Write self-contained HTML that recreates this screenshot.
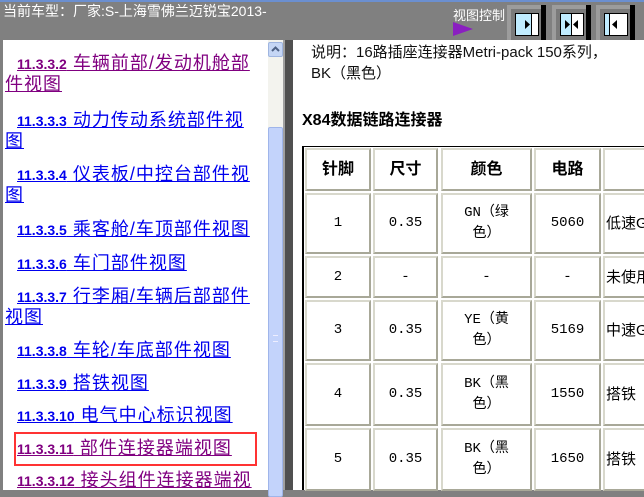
<!DOCTYPE html>
<html><head><meta charset="utf-8"><style>
*{margin:0;padding:0;box-sizing:border-box}
body{width:644px;height:490px;overflow:hidden;background:#808080;position:relative;font-family:"Liberation Sans","Noto Sans CJK SC",sans-serif}
.a{position:absolute}
.top{left:0;top:0;width:644px;height:2px;background:#6b8fd0}
.title{left:3px;top:2px;color:#fff;font-size:14px;line-height:18px}
.left{left:3px;top:40px;width:265px;height:450px;background:#fff;overflow:hidden}
.sb{left:268px;top:40px;width:15px;height:450px;background:#f3f3ee}
.sbup{left:268px;top:42px;width:15px;height:15px;background:#c5d6f5;border:1px solid #9fb5e0;border-radius:2px}
.thumb{left:268px;top:127px;width:15px;height:370px;background:#c3d3fb;border:1px solid #9fb5ea;border-radius:2px}
.sep{left:285px;top:40px;width:8px;height:450px;background:#505050}
.right{left:293px;top:40px;width:351px;height:450px;background:#fff}
.it{position:absolute;left:2px;white-space:nowrap;font-size:18px;letter-spacing:1px;line-height:20px;color:#0000ee}
.it u{text-decoration:underline}
.it i{display:inline-block;width:12px}
.it b{font-size:14px;letter-spacing:0;font-family:"Liberation Sans",sans-serif}
.v{color:#800080}
.btn{top:5px;width:39px;height:35px;background:#9c9c9c}
.btn .in{position:absolute;left:4px;top:4px;width:31px;height:31px;background:#7a7a7a}
.btn .bk{position:absolute;right:0;top:0;width:5px;height:35px;background:#000}
.btn .bx{position:absolute;left:8px;top:8px;width:24px;height:23px;background:#c0ecff;border:1px solid #000}
.c{position:absolute;border:2px solid;border-color:#d8d8cc #a8a898 #a8a898 #d8d8cc;display:flex;align-items:center;justify-content:center;text-align:center;font-family:"Liberation Mono","Noto Sans CJK SC",monospace;font-size:14px;line-height:21px;color:#000}
.h{font-family:"Liberation Sans","Noto Sans CJK SC",sans-serif;font-weight:bold;font-size:16px}
.l{justify-content:flex-start;padding-left:1px;font-family:"Liberation Sans","Noto Sans CJK SC",sans-serif;font-size:15px}
</style></head><body>
<div class="a top"></div>
<div class="a title">当前车型：厂家:S-上海雪佛兰迈锐宝2013-</div>
<div class="a" style="left:453px;top:5px;color:#fff;font-size:13px">视图控制</div>
<svg class="a" style="left:453px;top:22px" width="20" height="14"><polygon points="0,0 20,7 0,14" fill="#8a1fc0"/></svg>
<div class="a btn" style="left:507px"><div class="in"></div><div class="bk"></div><div class="bx"><svg width="22" height="21"><polygon points="9,6 14,10.5 9,15" fill="#000"/><rect x="15" y="0" width="1" height="21" fill="#000"/><rect x="16" y="0" width="6" height="21" fill="#fff"/></svg></div></div>
<div class="a btn" style="left:552px"><div class="in"></div><div class="bk"></div><div class="bx" style="background:linear-gradient(90deg,#c0ecff 50%,#fff 50%)"><svg width="22" height="21"><polygon points="4,6 9,10.5 4,15" fill="#000"/><rect x="10" y="0" width="1" height="21" fill="#000"/><polygon points="17,6 12,10.5 17,15" fill="#000"/></svg></div></div>
<div class="a btn" style="left:596px"><div class="in"></div><div class="bk"></div><div class="bx" style="background:#fff"><svg width="22" height="21"><rect x="0" y="0" width="4" height="21" fill="#c0ecff"/><rect x="4" y="0" width="1" height="21" fill="#000"/><polygon points="12,6 7,10.5 12,15" fill="#000"/></svg></div></div>

<div class="a left">
<div class="it v" style="top:13px"><i></i><u><b>11.3.3.2</b> 车辆前部/发动机舱部<br>件视图</u></div>
<div class="it" style="top:70px"><i></i><u><b>11.3.3.3</b> 动力传动系统部件视<br>图</u></div>
<div class="it" style="top:124px"><i></i><u><b>11.3.3.4</b> 仪表板/中控台部件视<br>图</u></div>
<div class="it" style="top:179px"><i></i><u><b>11.3.3.5</b> 乘客舱/车顶部件视图</u></div>
<div class="it" style="top:213px"><i></i><u><b>11.3.3.6</b> 车门部件视图</u></div>
<div class="it" style="top:246px"><i></i><u><b>11.3.3.7</b> 行李厢/车辆后部部件<br>视图</u></div>
<div class="it" style="top:300px"><i></i><u><b>11.3.3.8</b> 车轮/车底部件视图</u></div>
<div class="it" style="top:333px"><i></i><u><b>11.3.3.9</b> 搭铁视图</u></div>
<div class="it" style="top:365px"><i></i><u><b>11.3.3.10</b> 电气中心标识视图</u></div>
<div class="it v" style="top:398px"><i></i><u><b>11.3.3.11</b> 部件连接器端视图</u></div>
<div class="a" style="left:11px;top:392px;width:243px;height:34px;border:2px solid #ff3333"></div>
<div class="it v" style="top:430px"><i></i><u><b>11.3.3.12</b> 接头组件连接器端视</u></div>
</div>
<div class="a sb"></div><div class="a sbup"><svg width="13" height="13"><polyline points="3,8 6.5,4.5 10,8" fill="none" stroke="#4d6185" stroke-width="2"/></svg></div>
<div class="a thumb"><div style="position:absolute;left:4px;top:207px;width:5px;height:7px;border-top:1px solid #eef;border-bottom:1px solid #eef"></div></div>
<div class="a" style="left:283px;top:40px;width:2px;height:450px;background:#a0a0a0"></div>
<div class="a sep"></div>
<div class="a right"></div>
<div class="a" style="left:311px;top:42px;font-size:15px;line-height:21px;color:#111">说明：16路插座连接器Metri-pack 150系列，<br>BK（黑色）</div>
<div class="a" style="left:302px;top:106px;font-size:16px;font-weight:bold">X84数据链路连接器</div>
<div class="a" style="left:302px;top:146px;width:342px;height:1px;background:#000"></div>
<div class="a" style="left:302px;top:146px;width:2px;height:344px;background:#000"></div>

<div class="c h" style="left:305px;top:148px;width:66px;height:43px">针脚</div>
<div class="c h" style="left:373px;top:148px;width:65px;height:43px">尺寸</div>
<div class="c h" style="left:441px;top:148px;width:91px;height:43px">颜色</div>
<div class="c h" style="left:534px;top:148px;width:67px;height:43px">电路</div>
<div class="c h" style="left:603px;top:148px;width:50px;height:43px"></div>

<div class="c" style="left:305px;top:193px;width:66px;height:61px">1</div>
<div class="c" style="left:373px;top:193px;width:65px;height:61px">0.35</div>
<div class="c" style="left:441px;top:193px;width:91px;height:61px">GN（绿<br>色）</div>
<div class="c" style="left:534px;top:193px;width:67px;height:61px">5060</div>
<div class="c l" style="left:603px;top:193px;width:50px;height:61px">低速G</div>

<div class="c" style="left:305px;top:256px;width:66px;height:42px">2</div>
<div class="c" style="left:373px;top:256px;width:65px;height:42px">-</div>
<div class="c" style="left:441px;top:256px;width:91px;height:42px">-</div>
<div class="c" style="left:534px;top:256px;width:67px;height:42px">-</div>
<div class="c l" style="left:603px;top:256px;width:50px;height:42px">未使用</div>

<div class="c" style="left:305px;top:300px;width:66px;height:61px">3</div>
<div class="c" style="left:373px;top:300px;width:65px;height:61px">0.35</div>
<div class="c" style="left:441px;top:300px;width:91px;height:61px">YE（黄<br>色）</div>
<div class="c" style="left:534px;top:300px;width:67px;height:61px">5169</div>
<div class="c l" style="left:603px;top:300px;width:50px;height:61px">中速G</div>

<div class="c" style="left:305px;top:363px;width:66px;height:63px">4</div>
<div class="c" style="left:373px;top:363px;width:65px;height:63px">0.35</div>
<div class="c" style="left:441px;top:363px;width:91px;height:63px">BK（黑<br>色）</div>
<div class="c" style="left:534px;top:363px;width:67px;height:63px">1550</div>
<div class="c l" style="left:603px;top:363px;width:50px;height:63px">搭铁</div>

<div class="c" style="left:305px;top:428px;width:66px;height:63px">5</div>
<div class="c" style="left:373px;top:428px;width:65px;height:63px">0.35</div>
<div class="c" style="left:441px;top:428px;width:91px;height:63px">BK（黑<br>色）</div>
<div class="c" style="left:534px;top:428px;width:67px;height:63px">1650</div>
<div class="c l" style="left:603px;top:428px;width:50px;height:63px">搭铁</div>
</body></html>
